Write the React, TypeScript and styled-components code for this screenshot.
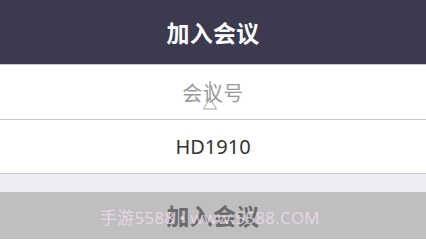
import React from "react";
import styled, { createGlobalStyle } from "styled-components";

const Global = createGlobalStyle`
  html, body { margin: 0; padding: 0; background: #ffffff; }
  body { width: 426px; height: 239px; overflow: hidden; }
  * { box-sizing: border-box; }
`;

const CJK = `"Noto Sans", "Noto Sans CJK SC", sans-serif`;

const Page = styled.div`
  width: 426px;
  height: 239px;
  display: flex;
  flex-direction: column;
  font-family: ${CJK};
`;

const Header = styled.header`
  height: 65px;
  flex: none;
  background: #3b3a4e;
  border-bottom: 1px solid #c8c8cc;
  display: flex;
  align-items: center;
  justify-content: center;
  padding-bottom: 1px;
`;

const Title = styled.h1`
  margin: 0;
  color: #ffffff;
  font-size: 23px;
  font-weight: 700;
  letter-spacing: 0.3px;
`;

const Field = styled.div<{ $h: number }>`
  position: relative;
  height: ${(p) => p.$h}px;
  flex: none;
  background: #ffffff;
  border-bottom: 1px solid #c8c8cc;
  display: flex;
  align-items: center;
  justify-content: center;
`;

const FieldText = styled.span<{ $placeholder?: boolean }>`
  font-size: 20px;
  color: ${(p) => (p.$placeholder ? "#9a9a9a" : "#333333")};
  font-family: ${CJK};
  letter-spacing: ${(p) => (p.$placeholder ? "0.5px" : "0")};
`;

const Caret = styled.svg`
  position: absolute;
  left: 202px;
  top: 16px;
`;

const Spacer = styled.div`
  height: 18px;
  flex: none;
  background: #ededf3;
`;

const JoinButton = styled.button`
  position: relative;
  flex: 1;
  border: none;
  margin: 0;
  padding: 0 0 2px 0;
  background: #bfbfbf;
  display: flex;
  align-items: center;
  justify-content: center;
  font-family: ${CJK};
  font-size: 23px;
  font-weight: 700;
  color: #6b6b6b;
  letter-spacing: 0.3px;
`;

const Watermark = styled.div`
  position: absolute;
  left: 100px;
  top: 12px;
  font-family: "Open Sans", "Noto Sans CJK SC", sans-serif;
  font-size: 17px;
  font-weight: 400;
  letter-spacing: 0.25px;
  color: rgba(246, 220, 244, 0.75);
  white-space: nowrap;
  pointer-events: none;
`;

export default function App() {
  return (
    <>
      <Global />
      <Page>
        <Header>
          <Title>加入会议</Title>
        </Header>
        <Field $h={55}>
          <FieldText $placeholder>会议号</FieldText>
          <Caret width="18" height="30" viewBox="0 0 18 30">
            <line x1="8" y1="0" x2="8" y2="19" stroke="#8a8a8a" strokeWidth="1.2" />
            <path d="M8 17 L14.5 28 L1.5 28 Z" fill="none" stroke="#a0a0a0" strokeWidth="1" />
          </Caret>
        </Field>
        <Field $h={54}>
          <FieldText>HD1910</FieldText>
        </Field>
        <Spacer />
        <JoinButton>
          加入会议
          <Watermark>手游5588 • www.5588.COM</Watermark>
        </JoinButton>
      </Page>
    </>
  );
}
